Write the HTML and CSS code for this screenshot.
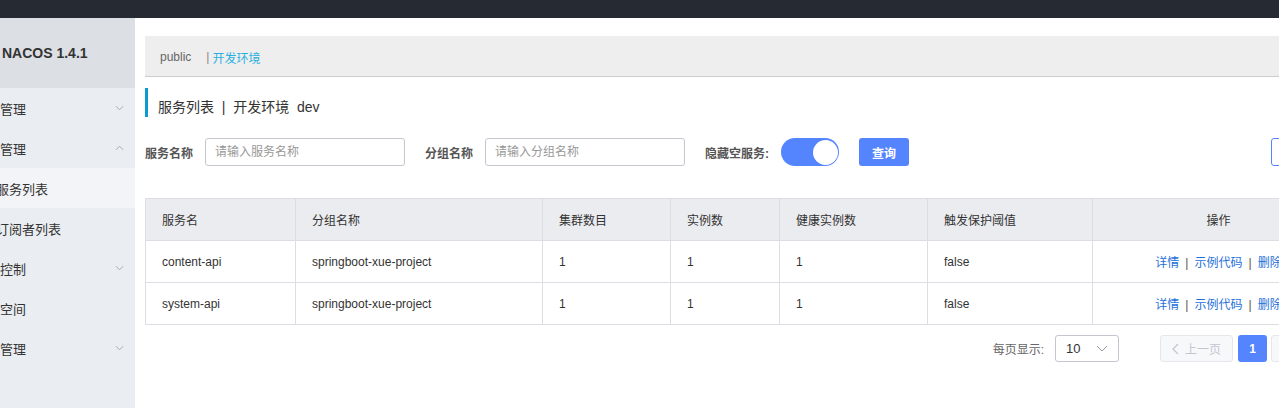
FILE: index.html
```html
<!DOCTYPE html>
<html lang="zh-CN">
<head>
<meta charset="utf-8">
<title>Nacos</title>
<link rel="stylesheet" href="styles.css">
</head>
<body>
<div class="topbar"></div>
<div class="layout">
  <aside class="sidebar">
    <div class="logo">NACOS 1.4.1</div>
    <nav class="menu">
      <div class="menu-item"><span>配置管理</span><svg class="chev" viewBox="0 0 10 6"><path d="M1 1l4 4 4-4"/></svg></div>
      <div class="menu-item"><span>服务管理</span><svg class="chev" viewBox="0 0 10 6"><path d="M1 5l4-4 4 4"/></svg></div>
      <div class="menu-item sub active"><span>服务列表</span></div>
      <div class="menu-item sub"><span>订阅者列表</span></div>
      <div class="menu-item"><span>权限控制</span><svg class="chev" viewBox="0 0 10 6"><path d="M1 1l4 4 4-4"/></svg></div>
      <div class="menu-item"><span>命名空间</span></div>
      <div class="menu-item"><span>集群管理</span><svg class="chev" viewBox="0 0 10 6"><path d="M1 1l4 4 4-4"/></svg></div>
    </nav>
  </aside>
  <main class="main">
    <div class="crumbs">
      <span class="ns">public</span>
      <span class="sep">|</span><span class="ns-active">开发环境</span>
    </div>
    <h1 class="title">服务列表&nbsp; |&nbsp; 开发环境&nbsp; dev</h1>
    <div class="filters">
      <label class="flabel">服务名称</label>
      <input class="finput" placeholder="请输入服务名称">
      <label class="flabel gap">分组名称</label>
      <input class="finput" placeholder="请输入分组名称">
      <label class="flabel gap">隐藏空服务:</label>
      <span class="switch"><span class="knob"></span></span>
      <button class="btn-primary">查询</button>
      <span class="spacer"></span>
      <button class="btn-outline">创建服务</button>
    </div>
    <table class="tbl">
      <colgroup>
        <col style="width:150px"><col style="width:247px"><col style="width:128px"><col style="width:109px"><col style="width:148px"><col style="width:165px"><col style="width:252px">
      </colgroup>
      <thead>
        <tr><th>服务名</th><th>分组名称</th><th>集群数目</th><th>实例数</th><th>健康实例数</th><th>触发保护阈值</th><th class="center">操作</th></tr>
      </thead>
      <tbody>
        <tr><td>content-api</td><td>springboot-xue-project</td><td>1</td><td>1</td><td>1</td><td>false</td><td class="center ops"><a>详情</a><span class="bar">|</span><a>示例代码</a><span class="bar">|</span><a>删除</a></td></tr>
        <tr><td>system-api</td><td>springboot-xue-project</td><td>1</td><td>1</td><td>1</td><td>false</td><td class="center ops"><a>详情</a><span class="bar">|</span><a>示例代码</a><span class="bar">|</span><a>删除</a></td></tr>
      </tbody>
    </table>
    <div class="pager">
      <span class="pg-label">每页显示:</span>
      <span class="pg-select"><span>10</span><svg class="pg-chev" viewBox="0 0 12 7"><path d="M1 1l5 5 5-5"/></svg></span>
      <span class="pg-btn disabled"><svg class="pg-arrow" viewBox="0 0 7 12"><path d="M6 1L1 6l5 5"/></svg>上一页</span>
      <span class="pg-num current">1</span>
      <span class="pg-btn disabled">下一页<svg class="pg-arrow" viewBox="0 0 7 12"><path d="M1 1l5 5-5 5"/></svg></span>
    </div>
  </main>
</div>
</body>
</html>
```

FILE: styles.css
```css
html, body {
  margin: 0;
  padding: 0;
  width: 1279px;
  height: 408px;
  overflow: hidden;
  background: #fff;
  font-family: "Liberation Sans", "Noto Sans CJK SC", sans-serif;
  color: #333;
}

.topbar {
  height: 18px;
  background: #252a33;
}

.layout {
  display: flex;
  align-items: stretch;
  min-height: 390px;
}

.sidebar {
  flex: none;
  width: 135px;
  background: #eaedf1;
  overflow: hidden;
}

.logo {
  height: 70px;
  background: #dcdfe4;
  font-size: 14px;
  font-weight: bold;
  color: #333;
  display: flex;
  align-items: center;
  padding-left: 2px;
  white-space: nowrap;
}

.menu {
  margin-left: -46px;
  width: 181px;
}

.menu-item {
  height: 40px;
  display: flex;
  align-items: center;
  justify-content: space-between;
  padding: 0 11px 0 20px;
  font-size: 13px;
  color: #333;
  white-space: nowrap;
  box-sizing: border-box;
}

.menu-item.sub {
  padding-left: 42px;
}

.menu-item.active {
  background: #f3f4f7;
}

.chev {
  width: 9px;
  height: 6px;
  fill: none;
  stroke: #a0a3aa;
  stroke-width: 1;
}

.main {
  flex: none;
  width: 1199px;
  padding: 0 10px;
}

.crumbs {
  margin-top: 18px;
  background: #eeeeee;
  border-bottom: 1px solid #cccccc;
  display: flex;
  align-items: center;
  padding-left: 15px;
  padding-top: 2px;
  box-sizing: border-box;
  height: 41px;
  font-size: 12px;
  margin-right: -80px;
}

.ns {
  color: #666;
  margin-right: 15px;
}

.sep {
  color: #888;
  margin-right: 3px;
}

.ns-active {
  color: #2ab0e0;
}

.title {
  margin: 11px 0 0 0;
  height: 20px;
  line-height: 20px;
  padding-top: 9px;
  border-left: 3px solid #0a9ccf;
  padding-left: 10px;
  font-size: 14px;
  font-weight: normal;
  color: #333;
  white-space: nowrap;
}

.filters {
  margin-top: 21px;
  height: 28px;
  display: flex;
  align-items: center;
}

.flabel {
  font-size: 12px;
  font-weight: bold;
  color: #555;
  margin-right: 12px;
  white-space: nowrap;
}

.flabel.gap {
  margin-left: 20px;
}

.finput {
  width: 200px;
  height: 28px;
  box-sizing: border-box;
  border: 1px solid #c4c6cf;
  border-radius: 3px;
  padding: 0 9px;
  font-size: 12px;
  font-family: "Liberation Sans", "Noto Sans CJK SC", sans-serif;
  color: #333;
  outline: none;
}

.finput::placeholder {
  color: #999;
}

.switch {
  width: 58px;
  height: 28px;
  border-radius: 14px;
  background: #5584ff;
  display: flex;
  align-items: center;
  justify-content: flex-end;
  padding: 0 1px;
  box-sizing: border-box;
}

.knob {
  width: 25px;
  height: 25px;
  border-radius: 50%;
  background: #fff;
}

.btn-primary {
  margin-left: 20px;
  width: 50px;
  height: 28px;
  border: none;
  border-radius: 3px;
  background: #5584ff;
  color: #fff;
  font-size: 12px;
  font-weight: bold;
  font-family: "Liberation Sans", "Noto Sans CJK SC", sans-serif;
  padding: 0;
}

.spacer {
  flex: 1;
}

.btn-outline {
  width: 73px;
  height: 28px;
  border: 1px solid #5584ff;
  border-radius: 3px;
  background: #fff;
  color: #5584ff;
  font-size: 12px;
  font-family: "Liberation Sans", "Noto Sans CJK SC", sans-serif;
  padding: 0;
}

.tbl {
  margin-top: 32px;
  width: 1199px;
  border-collapse: collapse;
  table-layout: fixed;
  font-size: 12px;
  border: 1px solid #dcdee3;
}

.tbl th,
.tbl td {
  height: 42px;
  padding: 0 16px;
  border: 1px solid #dcdee3;
  text-align: left;
  font-weight: normal;
  color: #333;
  white-space: nowrap;
  box-sizing: border-box;
}

.tbl thead th {
  background: #ebecf0;
}

.tbl .center {
  text-align: center;
}

.ops a {
  color: #1e6fd9;
}

.ops .bar {
  color: #555;
  margin: 0 6px;
}

.pager {
  margin-top: 10px;
  display: flex;
  align-items: center;
  justify-content: flex-end;
  height: 27px;
  font-size: 12px;
}

.pg-label {
  color: #666;
  margin-right: 11px;
}

.pg-select {
  width: 64px;
  height: 27px;
  box-sizing: border-box;
  border: 1px solid #c4c6cf;
  border-radius: 3px;
  display: flex;
  align-items: center;
  justify-content: space-between;
  padding: 0 10px 0 10px;
  font-size: 13px;
  color: #333;
  margin-right: 41px;
}

.pg-chev {
  width: 12px;
  height: 7px;
  fill: none;
  stroke: #999;
  stroke-width: 1;
}

.pg-btn {
  width: 73px;
  height: 27px;
  box-sizing: border-box;
  border: 1px solid #e6e7eb;
  border-radius: 3px;
  background: #f7f8fa;
  color: #c4c6cf;
  display: flex;
  align-items: center;
  justify-content: center;
  gap: 6px;
  font-size: 12px;
}

.pg-arrow {
  width: 7px;
  height: 12px;
  fill: none;
  stroke: #c4c6cf;
  stroke-width: 1.2;
}

.pg-num {
  width: 29px;
  height: 27px;
  box-sizing: border-box;
  border-radius: 3px;
  margin: 0 4px 0 5px;
  display: flex;
  align-items: center;
  justify-content: center;
  font-weight: bold;
}

.pg-num.current {
  background: #5584ff;
  color: #fff;
}
```
